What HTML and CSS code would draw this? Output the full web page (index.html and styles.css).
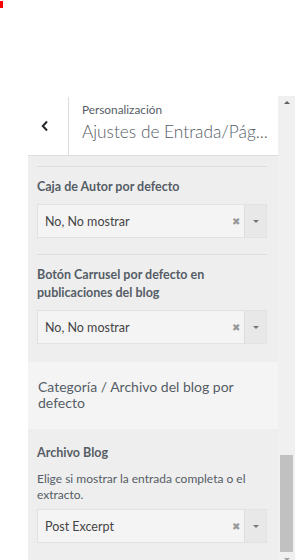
FILE: index.html
```html
<!doctype html>
<html lang="es">
<head>
	<meta charset="UTF-8">
	<title>Personalización</title>
	<link rel="stylesheet" href="styles.css">
</head>
<body>

	<div class="marca"></div>

	<div class="personalizar">
		<div class="panel">
			<!-- cabecera -->
			<div class="cabecera">
				<div class="volver">
					<svg width="8" height="12" viewBox="0 0 8 12"><polyline points="6,1.5 1.8,6 6,10.5" fill="none" stroke="#23282d" stroke-width="2"/></svg>
				</div>
				<div class="titulos">
					<span class="ruta">Personalización</span>
					<h3 class="titulo">Ajustes de Entrada/Pág...</h3>
				</div>
			</div>

			<ul class="controles">
				<li class="control">
					<span class="etiqueta">Caja de Autor por defecto</span>
					<div class="selector">
						<span class="valor">No, No mostrar</span>
						<span class="quitar">&#x2716;</span>
						<span class="flecha"></span>
					</div>
				</li>

				<li class="control">
					<span class="etiqueta">Botón Carrusel por defecto en publicaciones del blog</span>
					<div class="selector">
						<span class="valor">No, No mostrar</span>
						<span class="quitar">&#x2716;</span>
						<span class="flecha"></span>
					</div>
				</li>

				<li class="seccion">Categoría / Archivo del blog por defecto</li>

				<li class="control control-sin-borde">
					<span class="etiqueta">Archivo Blog</span>
					<span class="descripcion">Elige si mostrar la entrada completa o el extracto.</span>
					<div class="selector">
						<span class="valor">Post Excerpt</span>
						<span class="quitar">&#x2716;</span>
						<span class="flecha"></span>
					</div>
				</li>
			</ul>
		</div>

		<!-- barra de desplazamiento -->
		<div class="barra">
			<span class="boton-barra"><span class="tri tri-arriba"></span></span>
			<div class="pista"><div class="pulgar"></div></div>
			<span class="boton-barra"><span class="tri tri-abajo"></span></span>
		</div>
	</div>

</body>
</html>
```

FILE: styles.css
```css
* {margin: 0; padding: 0; box-sizing: border-box;}
html, body {overflow: hidden;}
body {font: normal 13px/17px Lato, "Liberation Sans", sans-serif; color: #555d66; background: #fff; height: 560px;}

.marca {width: 3px; height: 7px; margin-top: 1px; background: #f00;}

.personalizar {display: flex; margin: 88px 0 0 28px; height: 474px;}

.panel {width: 250px; background: #eee; overflow: hidden;}

.cabecera {display: flex; height: 60px; background: #fff; border-bottom: 1px solid #ddd;}
.cabecera .volver {width: 41px; display: flex; align-items: center; justify-content: center; padding: 0 6px 0 0; border-right: 1px solid #ddd; margin-top: 1px;}
.cabecera .titulos {flex: 1; min-width: 0; padding: 6px 0 0 13px; display: flex; flex-direction: column;}
.cabecera .ruta {font-size: 11.8px; line-height: 16px;}
.cabecera .titulo {font-size: 17.3px; line-height: 28px; font-weight: 300; white-space: nowrap; overflow: hidden;}

.controles {list-style: none;}
.control {margin: 10px 11px 0 9px; padding: 11px 0 16px; border-top: 1px solid #ddd; display: flex; flex-direction: column;}
.control + .control {margin-top: 0;}
.control .etiqueta {font-weight: bold; font-size: 12.5px; line-height: 18px; margin-bottom: 8px;}
.control .descripcion {font-size: 12px; line-height: 16px; margin: 1px 0 6px;}
.control-sin-borde {border-top: 0; margin-top: 0; padding-top: 15px;}

.selector {display: flex; align-items: center; height: 34px; background: #f4f4f4; border: 1px solid #e2e2e2;}
.selector .valor {flex: 1; padding-left: 7px; font-size: 12.5px; color: #444;}
.selector .quitar {font-size: 10px; color: #999; padding-right: 4px;}
.selector .flecha {width: 22px; height: 100%; background: #e8e8e8; border-left: 1px solid #ddd; display: flex; align-items: center; justify-content: center;}
.selector .flecha:after {content: ""; border: 3.5px solid transparent; border-top: 3.5px solid #777; border-bottom: 0; margin-top: 1px;}

.seccion {margin-top: 2px; padding: 17px 10px 18px; background: #f4f4f4; font-size: 14px; line-height: 16px;}

.barra {width: 17px; background: #f0f0f0; display: flex; flex-direction: column;}
.boton-barra {height: 17px; display: flex; justify-content: center; align-items: flex-start; padding-top: 5px;}
.tri {border: 3px solid transparent;}
.tri-arriba {border-bottom: 3px solid #606060; border-top: 0;}
.tri-abajo {border-top: 3px solid #a0a0a0; border-bottom: 0; margin-top: 0;}
.pista {flex: 1; display: flex; flex-direction: column; justify-content: flex-end; padding: 0 2px 1px;}
.pulgar {height: 97px; background: #c1c1c1;}
```
